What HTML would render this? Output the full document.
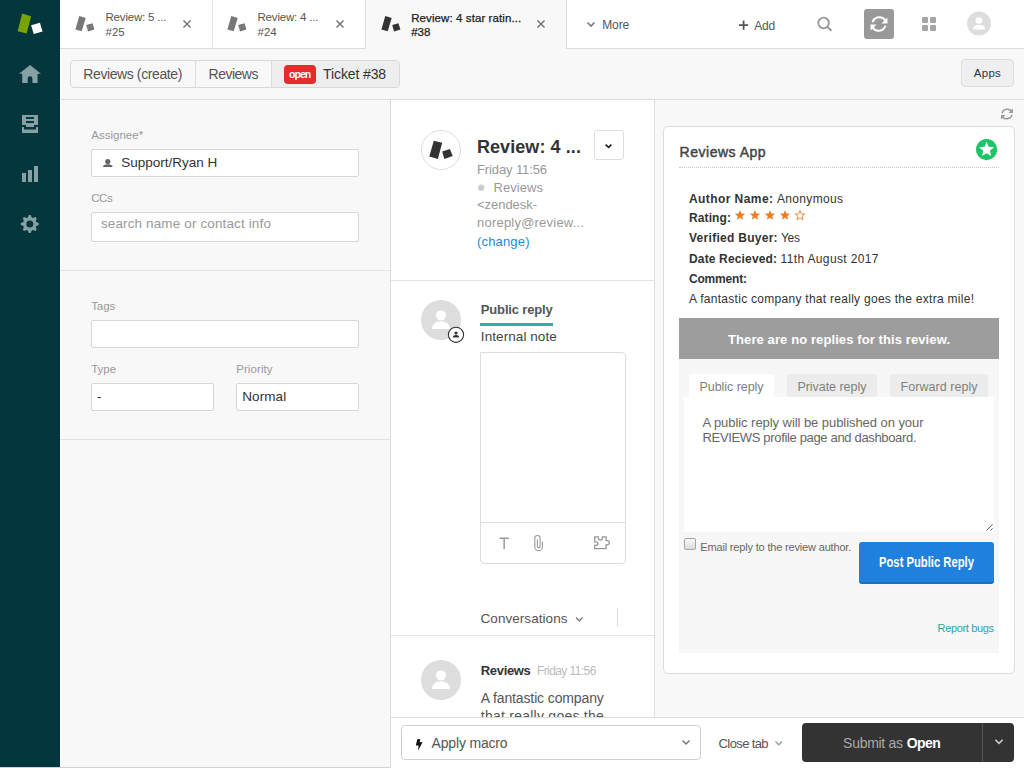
<!DOCTYPE html>
<html><head><meta charset="utf-8"><title>Ticket</title><style>*{box-sizing:border-box;margin:0;padding:0}
html,body{width:1024px;height:768px;overflow:hidden;background:#f8f8f8;font-family:"Liberation Sans",sans-serif;color:#333;position:relative}
.a{position:absolute;display:block}
.t{position:absolute;white-space:nowrap}
</style></head><body>
<div class="a" style="left:0px;top:0px;width:60px;height:768px;background:#03363d"></div>
<div class="a" style="left:60px;top:0px;width:964px;height:49px;background:#fff"></div>
<div class="a" style="left:60px;top:48px;width:305px;height:1px;background:#ddd"></div>
<div class="a" style="left:566px;top:48px;width:458px;height:1px;background:#ddd"></div>
<div class="a" style="left:365px;top:0px;width:201px;height:49px;background:#f8f8f8"></div>
<div class="a" style="left:212px;top:0px;width:1px;height:48px;background:#e3e3e3"></div>
<div class="a" style="left:365px;top:0px;width:1px;height:49px;background:#ddd"></div>
<div class="a" style="left:566px;top:0px;width:1px;height:49px;background:#ddd"></div>
<div class="a" style="left:61px;top:99px;width:963px;height:1px;background:#ddd"></div>
<div class="a" style="left:60px;top:49px;width:1px;height:719px;background:#fff"></div>
<div class="a" style="left:0px;top:767px;width:1024px;height:1px;background:#d2d2d2"></div>
<div class="a" style="left:60px;top:270px;width:330px;height:1px;background:#e3e3e3"></div>
<div class="a" style="left:60px;top:439px;width:330px;height:1px;background:#e3e3e3"></div>
<div class="a" style="left:390px;top:100px;width:1px;height:668px;background:#ddd"></div>
<div class="a" style="left:391px;top:100px;width:263px;height:617px;background:#fff"></div>
<div class="a" style="left:654px;top:100px;width:1px;height:617px;background:#ddd"></div>
<div class="a" style="left:391px;top:280px;width:263px;height:1px;background:#e3e3e3"></div>
<div class="a" style="left:391px;top:635px;width:263px;height:1px;background:#e3e3e3"></div>
<div class="a" style="left:391px;top:717px;width:633px;height:51px;background:#fff;border-top:1px solid #ddd"></div>
<svg class="a" style="left:0px;top:0px;" width="60" height="240" viewBox="0 0 60 240"><polygon points="22.2,13.6 31.1,16.2 26.7,33.6 17.6,31.3" fill="#78a300"/><polygon points="31.1,25.3 39.9,22.7 42.6,31.6 33.7,33.9" fill="#fff"/><path d="M30,65 L41,73.7 L37.6,73.7 L37.6,83 L32.4,83 L32.4,78.5 A2.35,2.35 0 0 0 27.7,78.5 L27.7,83 L22.2,83 L22.2,73.7 L19,73.7 Z" fill="#87a0a3"/><path d="M22,115 H38 V125 H34 V127 H26 V125 H22 Z M26,117 V119 H34 V117 Z M26,121 V123 H34 V121 Z" fill="#87a0a3" fill-rule="evenodd"/><path d="M22,127 H24 V129.5 H36 V127 H38 V133 H22 Z" fill="#87a0a3"/><rect x="22" y="173" width="4" height="9" fill="#87a0a3"/><rect x="28" y="170" width="4" height="12" fill="#87a0a3"/><rect x="34" y="166" width="4" height="16" fill="#87a0a3"/></svg>
<svg class="a" style="left:0px;top:200px;" width="60" height="50" viewBox="0 0 60 50"><g transform="translate(0,-200)"><polygon points="38.76,223.10 38.76,224.90 36.16,226.11 35.79,227.01 36.77,229.70 35.50,230.97 32.81,229.99 31.91,230.36 30.70,232.96 28.90,232.96 27.69,230.36 26.79,229.99 24.10,230.97 22.83,229.70 23.81,227.01 23.44,226.11 20.84,224.90 20.84,223.10 23.44,221.89 23.81,220.99 22.83,218.30 24.10,217.03 26.79,218.01 27.69,217.64 28.90,215.04 30.70,215.04 31.91,217.64 32.81,218.01 35.50,217.03 36.77,218.30 35.79,220.99 36.16,221.89" fill="#87a0a3"/><circle cx="29.8" cy="224" r="3.5" fill="#03363d"/></g></svg>
<svg class="a" style="left:0px;top:0px;" width="600" height="48" viewBox="0 0 600 48"><polygon points="79.3,16.1 85.7,18.1 81.7,31.2 75.4,29.5" fill="#777"/><polygon points="86.2,25.1 92.5,23.2 94.4,29.6 88.1,31.5" fill="#777"/><polygon points="231.3,16.1 237.7,18.1 233.7,31.2 227.4,29.5" fill="#777"/><polygon points="238.2,25.1 244.5,23.2 246.4,29.6 240.1,31.5" fill="#777"/><polygon points="385.3,16.1 391.7,18.1 387.7,31.2 381.4,29.5" fill="#333"/><polygon points="392.2,25.1 398.5,23.2 400.4,29.6 394.1,31.5" fill="#333"/></svg>
<svg class="a" style="left:0px;top:0px;" width="600" height="48" viewBox="0 0 600 48"><path d="M183.5,20.5 L190.5,27.5 M190.5,20.5 L183.5,27.5" stroke="#777" stroke-width="1.5"/><path d="M336.5,20.5 L343.5,27.5 M343.5,20.5 L336.5,27.5" stroke="#777" stroke-width="1.5"/><path d="M537.5,20.5 L544.5,27.5 M544.5,20.5 L537.5,27.5" stroke="#777" stroke-width="1.5"/></svg>
<div class="t" style="left:105.5px;top:12px;font-size:11.5px;line-height:11.5px;color:#555;letter-spacing:-0.189px;">Review: 5 ...</div>
<div class="t" style="left:105.5px;top:27px;font-size:11.5px;line-height:11.5px;color:#555;">#25</div>
<div class="t" style="left:257.5px;top:12px;font-size:11.5px;line-height:11.5px;color:#555;letter-spacing:-0.189px;">Review: 4 ...</div>
<div class="t" style="left:257.5px;top:27px;font-size:11.5px;line-height:11.5px;color:#555;">#24</div>
<div class="t" style="left:411.2px;top:13px;font-size:11.5px;line-height:11.5px;color:#222;letter-spacing:0.091px;-webkit-text-stroke:0.25px #222;">Review: 4 star ratin...</div>
<div class="t" style="left:411.2px;top:27px;font-size:11.5px;line-height:11.5px;color:#222;-webkit-text-stroke:0.25px #222;">#38</div>
<svg class="a" style="left:580px;top:15px;" width="20" height="15" viewBox="0 0 20 15"><path d="M7.5,7.5 L11,11 L14.5,7.5" stroke="#777" stroke-width="1.6" fill="none"/></svg>
<div class="t" style="left:602.2px;top:19px;font-size:12px;line-height:12px;color:#555;letter-spacing:-0.113px;">More</div>
<svg class="a" style="left:735px;top:18px;" width="16" height="14" viewBox="0 0 16 14"><path d="M8.6,2.5 V11.7 M4,7.1 H13.2" stroke="#555" stroke-width="1.8"/></svg>
<div class="t" style="left:754.3px;top:20px;font-size:12px;line-height:12px;color:#555;letter-spacing:-0.176px;">Add</div>
<svg class="a" style="left:810px;top:10px;" width="30" height="30" viewBox="0 0 30 30"><circle cx="13.6" cy="13" r="5.3" stroke="#999" stroke-width="1.8" fill="none"/><path d="M17.5,17 L21.5,20.8" stroke="#999" stroke-width="2"/></svg>
<div class="a" style="left:864px;top:9px;width:30px;height:30px;background:#999;border-radius:3px"></div>
<svg class="a" style="left:864px;top:9px;" width="30" height="30" viewBox="0 0 30 30"><path d="M21.6,12.2 A7,7 0 0 0 8.6,13.2" stroke="#fff" stroke-width="2.2" fill="none"/><path d="M8.4,17.8 A7,7 0 0 0 21.4,16.8" stroke="#fff" stroke-width="2.2" fill="none"/><polygon points="23.5,8.5 23.5,14.5 17.5,14.5" fill="#fff"/><polygon points="6.5,21.5 6.5,15.5 12.5,15.5" fill="#fff"/></svg>
<svg class="a" style="left:920px;top:15px;" width="18" height="18" viewBox="0 0 18 18"><rect x="2" y="2" width="6" height="6" rx="1" fill="#a5a5a5"/><rect x="10" y="2" width="6" height="6" rx="1" fill="#a5a5a5"/><rect x="2" y="10" width="6" height="6" rx="1" fill="#a5a5a5"/><rect x="10" y="10" width="6" height="6" rx="1" fill="#a5a5a5"/></svg>
<svg class="a" style="left:965px;top:10px;" width="28" height="28" viewBox="0 0 28 28"><circle cx="14" cy="13.6" r="12" fill="#ddd"/><circle cx="14" cy="10.5" r="3.3" fill="#fff"/><path d="M8,19.5 Q8,14.8 14,14.8 Q20,14.8 20,19.5 Z" fill="#fff"/></svg>
<div class="a" style="left:70px;top:60px;width:330px;height:28px;border:1px solid #d8d8d8;border-radius:4px;background:#f8f8f8"></div>
<div class="a" style="left:271px;top:61px;width:128px;height:26px;background:#eee;border-radius:0 3px 3px 0"></div>
<div class="a" style="left:195px;top:61px;width:1px;height:26px;background:#ddd"></div>
<div class="a" style="left:271px;top:61px;width:1px;height:26px;background:#ddd"></div>
<div class="t" style="left:83.3px;top:67px;font-size:14px;line-height:14px;color:#555;letter-spacing:-0.402px;">Reviews (create)</div>
<div class="t" style="left:208.5px;top:67px;font-size:14px;line-height:14px;color:#555;letter-spacing:-0.484px;">Reviews</div>
<div class="a" style="left:284px;top:65px;width:32px;height:19px;background:#e52b2b;border-radius:4px"></div>
<div class="t" style="left:289.0px;top:69px;font-size:10.5px;line-height:10.5px;color:#fff;font-weight:bold;letter-spacing:-0.960px;">open</div>
<div class="t" style="left:323.1px;top:67px;font-size:14px;line-height:14px;color:#333;letter-spacing:-0.118px;">Ticket #38</div>
<div class="a" style="left:961px;top:59px;width:53px;height:28px;border:1px solid #dcdcdc;border-radius:4px;background:#efefef"></div>
<div class="t" style="left:973.8px;top:68px;font-size:11.5px;line-height:11.5px;color:#333;letter-spacing:0.263px;">Apps</div>
<div class="t" style="left:91.2px;top:130px;font-size:11.5px;line-height:11.5px;color:#999;letter-spacing:0.027px;">Assignee*</div>
<div class="a" style="left:91px;top:149px;width:268px;height:28px;background:#fff;border:1px solid #d6d6d6;border-radius:2px"></div>
<svg class="a" style="left:100px;top:156px;" width="16" height="14" viewBox="0 0 16 14"><circle cx="7.8" cy="5.5" r="2.6" fill="#666"/><path d="M3,11 Q3,8.3 7.8,8.3 Q12.6,8.3 12.6,11 Z" fill="#666"/></svg>
<div class="t" style="left:121.3px;top:156px;font-size:13.5px;line-height:13.5px;color:#333;letter-spacing:-0.004px;">Support/Ryan H</div>
<div class="t" style="left:91.2px;top:193px;font-size:11.5px;line-height:11.5px;color:#999;letter-spacing:-0.380px;">CCs</div>
<div class="a" style="left:91px;top:212px;width:268px;height:30px;background:#fff;border:1px solid #d6d6d6;border-radius:2px"></div>
<div class="t" style="left:100.9px;top:217px;font-size:13.5px;line-height:13.5px;color:#999;letter-spacing:0.131px;">search name or contact info</div>
<div class="t" style="left:91.2px;top:301px;font-size:11.5px;line-height:11.5px;color:#999;letter-spacing:-0.097px;">Tags</div>
<div class="a" style="left:91px;top:320px;width:268px;height:28px;background:#fff;border:1px solid #d6d6d6;border-radius:2px"></div>
<div class="t" style="left:91.2px;top:364px;font-size:11.5px;line-height:11.5px;color:#999;letter-spacing:0.023px;">Type</div>
<div class="a" style="left:91px;top:383px;width:123px;height:28px;background:#fff;border:1px solid #d6d6d6;border-radius:2px"></div>
<div class="t" style="left:236.2px;top:364px;font-size:11.5px;line-height:11.5px;color:#999;letter-spacing:0.089px;">Priority</div>
<div class="a" style="left:236px;top:383px;width:123px;height:28px;background:#fff;border:1px solid #d6d6d6;border-radius:2px"></div>
<div class="t" style="left:97.0px;top:390px;font-size:13.5px;line-height:13.5px;color:#333;">-</div>
<div class="t" style="left:242.2px;top:390px;font-size:13.5px;line-height:13.5px;color:#333;letter-spacing:0.099px;">Normal</div>
<svg class="a" style="left:420px;top:129px;" width="42" height="42" viewBox="0 0 42 42"><circle cx="21" cy="21" r="19.5" fill="#fff" stroke="#ddd" stroke-width="1"/><g transform="translate(-420,-129)"><polygon points="433.8,140.8 442.2,142.8 437.9,159 429.3,156.4" fill="#333"/><polygon points="442.2,151.4 449.9,149 452.7,156.1 444.3,159" fill="#333"/></g></svg>
<div class="t" style="left:476.9px;top:138px;font-size:18px;line-height:18px;color:#333;font-weight:bold;letter-spacing:0.080px;">Review: 4 ...</div>
<div class="a" style="left:594px;top:130px;width:30px;height:30px;border:1px solid #ddd;border-radius:3px;background:#fff"></div>
<svg class="a" style="left:594px;top:130px;" width="30" height="30" viewBox="0 0 30 30"><path d="M11.6,14.6 L14.6,17.4 L17.4,14.6" stroke="#222" stroke-width="1.7" fill="none"/></svg>
<div class="t" style="left:477.0px;top:163px;font-size:13px;line-height:13px;color:#999;letter-spacing:-0.118px;">Friday 11:56</div>
<svg class="a" style="left:474px;top:182px;" width="12" height="12" viewBox="0 0 12 12"><circle cx="7.2" cy="5.7" r="3.1" fill="#ccc"/></svg>
<div class="t" style="left:493.6px;top:181px;font-size:13px;line-height:13px;color:#999;letter-spacing:0.046px;">Reviews</div>
<div class="t" style="left:477.0px;top:198px;font-size:13px;line-height:13px;color:#999;letter-spacing:-0.043px;">&lt;zendesk-</div>
<div class="t" style="left:477.0px;top:216px;font-size:13px;line-height:13px;color:#999;letter-spacing:0.218px;">noreply@review...</div>
<div class="t" style="left:477.0px;top:235px;font-size:13px;line-height:13px;color:#1a8bd6;letter-spacing:0.170px;">(change)</div>
<svg class="a" style="left:420px;top:299px;" width="50" height="50" viewBox="0 0 50 50"><circle cx="21" cy="21" r="20" fill="#ddd"/><circle cx="21" cy="16.4" r="5" fill="#fff"/><path d="M12,30 Q12.5,22.3 21,22.3 Q29.5,22.3 30,30 Z" fill="#fff"/><circle cx="36" cy="35.8" r="7.6" fill="#fff" stroke="#333" stroke-width="1.1"/><circle cx="36" cy="34" r="1.6" fill="#333"/><path d="M33,38.4 Q33,36.1 36,36.1 Q39,36.1 39,38.4 Z" fill="#333"/></svg>
<div class="t" style="left:480.8px;top:303px;font-size:13px;line-height:13px;color:#555;font-weight:bold;letter-spacing:-0.154px;">Public reply</div>
<div class="a" style="left:480px;top:323px;width:73px;height:3px;background:#30aabc"></div>
<div class="t" style="left:480.8px;top:330px;font-size:13.5px;line-height:13.5px;color:#444;letter-spacing:0.079px;">Internal note</div>
<div class="a" style="left:480px;top:352px;width:146px;height:212px;border:1px solid #ddd;border-radius:0 4px 4px 4px;background:#fff"></div>
<div class="a" style="left:481px;top:522px;width:144px;height:1px;background:#ddd"></div>
<svg class="a" style="left:480px;top:520px;" width="146" height="40" viewBox="0 0 146 40"><g transform="translate(-480,-520)"><path d="M499.5,538.2 H508.8 M504.15,538.2 V549" stroke="#999" stroke-width="1.5" fill="none"/><path d="M542.4,541.5 V547 A3.8,3.8 0 0 1 534.8,547 V538.2 A2.65,2.65 0 0 1 540.1,538.2 V546.5 A1.35,1.35 0 0 1 537.4,546.5 V539.5" stroke="#999" stroke-width="1.1" fill="none"/><path d="M594.7,536.9 H598.3 A2.1,3.2 0 0 0 602.5,536.9 H606.1 V540.3 A3.2,2.35 0 0 1 606.1,545 V548.7 H594.7 V545.5 A3.4,1.8 0 0 0 594.7,541.9 Z" stroke="#999" stroke-width="1.3" fill="none"/></g></svg>
<div class="t" style="left:480.5px;top:612px;font-size:13.5px;line-height:13.5px;color:#555;letter-spacing:0.059px;">Conversations</div>
<svg class="a" style="left:570px;top:610px;" width="20" height="15" viewBox="0 0 20 15"><path d="M6,7.5 L9.3,10.8 L12.6,7.5" stroke="#777" stroke-width="1.3" fill="none"/></svg>
<div class="a" style="left:617px;top:608px;width:1px;height:19px;background:#ddd"></div>
<svg class="a" style="left:420px;top:659px;" width="44" height="44" viewBox="0 0 44 44"><circle cx="21" cy="21" r="20" fill="#ddd"/><circle cx="21" cy="16.4" r="5" fill="#fff"/><path d="M12,30 Q12.5,22.3 21,22.3 Q29.5,22.3 30,30 Z" fill="#fff"/></svg>
<div class="t" style="left:480.8px;top:664px;font-size:13px;line-height:13px;color:#333;font-weight:bold;letter-spacing:-0.339px;">Reviews</div>
<div class="t" style="left:536.9px;top:665px;font-size:12px;line-height:12px;color:#bbb;letter-spacing:-0.574px;">Friday 11:56</div>
<div class="t" style="left:480.8px;top:691px;font-size:14px;line-height:14px;color:#555;letter-spacing:-0.127px;">A fantastic company</div>
<div class="a" style="left:391px;top:705px;width:263px;height:12px;overflow:hidden"><div class="t" style="left:89.8px;top:4px;font-size:14px;line-height:14px;color:#555;letter-spacing:0.248px;">that really goes the</div>
</div>
<div class="a" style="left:401px;top:725px;width:300px;height:35px;border:1px solid #d0d0d0;border-radius:4px;background:#fff"></div>
<svg class="a" style="left:412px;top:737px;" width="14" height="15" viewBox="0 0 14 15"><polygon points="5.2,2.2 8.4,2.2 7.6,5.2 10.6,5.0 6.0,13.8 6.6,8.6 3.9,8.6" fill="#111"/></svg>
<div class="t" style="left:431.6px;top:736px;font-size:14px;line-height:14px;color:#555;letter-spacing:-0.181px;">Apply macro</div>
<svg class="a" style="left:678px;top:735px;" width="16" height="14" viewBox="0 0 16 14"><path d="M4.5,5.5 L8,9 L11.5,5.5" stroke="#777" stroke-width="1.5" fill="none"/></svg>
<div class="t" style="left:718.6px;top:737px;font-size:13px;line-height:13px;color:#555;letter-spacing:-0.615px;">Close tab</div>
<svg class="a" style="left:771px;top:735px;" width="16" height="14" viewBox="0 0 16 14"><path d="M4.5,6.5 L7.8,9.8 L11.1,6.5" stroke="#999" stroke-width="1.3" fill="none"/></svg>
<div class="a" style="left:802px;top:723px;width:212px;height:39px;background:#333;border-radius:4px"></div>
<div class="a" style="left:982px;top:723px;width:1px;height:39px;background:#555"></div>
<div class="t" style="left:843.1px;top:736px;font-size:14px;line-height:14px;color:#aaa;letter-spacing:-0.281px;">Submit as</div>
<div class="t" style="left:906.7px;top:736px;font-size:14px;line-height:14px;color:#fff;font-weight:bold;letter-spacing:-0.593px;">Open</div>
<svg class="a" style="left:990px;top:733px;" width="18" height="14" viewBox="0 0 18 14"><path d="M5.3,6.8 L9,10.4 L12.7,6.8" stroke="#ccc" stroke-width="1.6" fill="none"/></svg>
<svg class="a" style="left:998px;top:105px;" width="18" height="18" viewBox="0 0 18 18"><path d="M14.2,7.2 A5.5,5.5 0 0 0 4,8.2" stroke="#999" stroke-width="1.5" fill="none"/><path d="M3.8,10.8 A5.5,5.5 0 0 0 14,9.8" stroke="#999" stroke-width="1.5" fill="none"/><polygon points="15,3.5 15,8 10.5,8" fill="#999"/><polygon points="3,14.5 3,10 7.5,10" fill="#999"/></svg>
<div class="a" style="left:663px;top:126px;width:352px;height:548px;background:#fff;border:1px solid #ddd;border-radius:5px"></div>
<div class="t" style="left:679.6px;top:145px;font-size:14px;line-height:14px;color:#444;letter-spacing:0.507px;-webkit-text-stroke:0.45px #444;">Reviews App</div>
<svg class="a" style="left:970px;top:133px;" width="34" height="34" viewBox="0 0 34 34"><circle cx="16.6" cy="16.6" r="10.6" fill="#1ec46a"/><polygon points="16.60,8.80 18.66,13.87 24.11,14.26 19.93,17.78 21.24,23.09 16.60,20.20 11.96,23.09 13.27,17.78 9.09,14.26 14.54,13.87" fill="#fff"/></svg>
<div class="a" style="left:679px;top:167px;width:320px;height:1px;border-top:1px dotted #c8c8c8"></div>
<div class="t" style="left:689.0px;top:193px;font-size:12px;line-height:12px;color:#333;font-weight:bold;letter-spacing:0.424px;">Author Name:</div>
<div class="t" style="left:777.0px;top:193px;font-size:12px;line-height:12px;color:#333;letter-spacing:0.329px;">Anonymous</div>
<div class="t" style="left:689.0px;top:212px;font-size:12px;line-height:12px;color:#333;font-weight:bold;letter-spacing:0.112px;">Rating:</div>
<svg class="a" style="left:733.8px;top:209px;" width="12" height="12" viewBox="0 0 12 12"><polygon points="6.00,1.10 7.38,4.60 11.14,4.83 8.23,7.23 9.17,10.87 6.00,8.85 2.83,10.87 3.77,7.23 0.86,4.83 4.62,4.60" fill="#f07c22"/></svg>
<svg class="a" style="left:748.7px;top:209px;" width="12" height="12" viewBox="0 0 12 12"><polygon points="6.00,1.10 7.38,4.60 11.14,4.83 8.23,7.23 9.17,10.87 6.00,8.85 2.83,10.87 3.77,7.23 0.86,4.83 4.62,4.60" fill="#f07c22"/></svg>
<svg class="a" style="left:763.6px;top:209px;" width="12" height="12" viewBox="0 0 12 12"><polygon points="6.00,1.10 7.38,4.60 11.14,4.83 8.23,7.23 9.17,10.87 6.00,8.85 2.83,10.87 3.77,7.23 0.86,4.83 4.62,4.60" fill="#f07c22"/></svg>
<svg class="a" style="left:778.6px;top:209px;" width="12" height="12" viewBox="0 0 12 12"><polygon points="6.00,1.10 7.38,4.60 11.14,4.83 8.23,7.23 9.17,10.87 6.00,8.85 2.83,10.87 3.77,7.23 0.86,4.83 4.62,4.60" fill="#f07c22"/></svg>
<svg class="a" style="left:794px;top:209px;" width="12" height="12" viewBox="0 0 12 12"><polygon points="6.00,1.60 7.29,4.82 10.76,5.05 8.09,7.28 8.94,10.65 6.00,8.80 3.06,10.65 3.91,7.28 1.24,5.05 4.71,4.82" fill="none" stroke="#f07c22" stroke-width="0.9"/></svg>
<div class="t" style="left:689.0px;top:232px;font-size:12px;line-height:12px;color:#333;font-weight:bold;letter-spacing:0.279px;">Verified Buyer:</div>
<div class="t" style="left:781.0px;top:232px;font-size:12px;line-height:12px;color:#333;letter-spacing:-0.288px;">Yes</div>
<div class="t" style="left:689.0px;top:253px;font-size:12px;line-height:12px;color:#333;font-weight:bold;letter-spacing:0.151px;">Date Recieved:</div>
<div class="t" style="left:780.6px;top:253px;font-size:12px;line-height:12px;color:#333;letter-spacing:0.352px;">11th August 2017</div>
<div class="t" style="left:689.0px;top:273px;font-size:12px;line-height:12px;color:#333;font-weight:bold;letter-spacing:-0.190px;">Comment:</div>
<div class="t" style="left:689.0px;top:293px;font-size:12px;line-height:12px;color:#333;letter-spacing:0.278px;">A fantastic company that really goes the extra mile!</div>
<div class="a" style="left:679px;top:318px;width:320px;height:41px;background:#9d9d9d"></div>
<div class="t" style="left:728.0px;top:333px;font-size:13px;line-height:13px;color:#fff;font-weight:bold;letter-spacing:0.099px;">There are no replies for this review.</div>
<div class="a" style="left:679px;top:359px;width:320px;height:294px;background:#f7f7f7"></div>
<div class="a" style="left:689px;top:374px;width:85px;height:24px;background:#fff;border-radius:3px 3px 0 0"></div>
<div class="a" style="left:787px;top:374px;width:90px;height:23px;background:#ececec;border-radius:3px 3px 0 0"></div>
<div class="a" style="left:890px;top:374px;width:98px;height:23px;background:#ececec;border-radius:3px 3px 0 0"></div>
<div class="t" style="left:699.5px;top:381px;font-size:12.5px;line-height:12.5px;color:#808080;letter-spacing:-0.056px;">Public reply</div>
<div class="t" style="left:797.4px;top:381px;font-size:12.5px;line-height:12.5px;color:#808080;letter-spacing:-0.039px;">Private reply</div>
<div class="t" style="left:900.6px;top:381px;font-size:12.5px;line-height:12.5px;color:#808080;letter-spacing:0.049px;">Forward reply</div>
<div class="a" style="left:684px;top:397px;width:310px;height:135px;background:#fff"></div>
<div class="t" style="left:702.5px;top:416px;font-size:13px;line-height:13px;color:#666;letter-spacing:-0.059px;">A public reply will be published on your</div>
<div class="t" style="left:702.5px;top:431px;font-size:13px;line-height:13px;color:#666;letter-spacing:-0.337px;">REVIEWS profile page and dashboard.</div>
<svg class="a" style="left:982px;top:519px;" width="12" height="12" viewBox="0 0 12 12"><path d="M4.4,11.5 L10.6,5.3 M8.4,11.5 L10.6,9.3" stroke="#555" stroke-width="1"/></svg>
<div class="a" style="left:684px;top:538px;width:12px;height:12px;border:1px solid #a5a5a5;border-radius:2px;background:linear-gradient(#f8f8f8,#dcdcdc)"></div>
<div class="t" style="left:700.3px;top:542px;font-size:11px;line-height:11px;color:#666;letter-spacing:-0.172px;">Email reply to the review author.</div>
<div class="a" style="left:859px;top:542px;width:135px;height:42px;background:#1f80dd;border-radius:3px;border-bottom:2px solid #1a6fc0"></div>
<div class="t" style="left:879.4px;top:555px;font-size:14px;line-height:14px;color:#fff;font-weight:bold;transform:scaleX(0.8034);transform-origin:0 0;">Post Public Reply</div>
<div class="t" style="left:937.6px;top:623px;font-size:11px;line-height:11px;color:#2ea0b8;letter-spacing:-0.353px;">Report bugs</div>
</body></html>
